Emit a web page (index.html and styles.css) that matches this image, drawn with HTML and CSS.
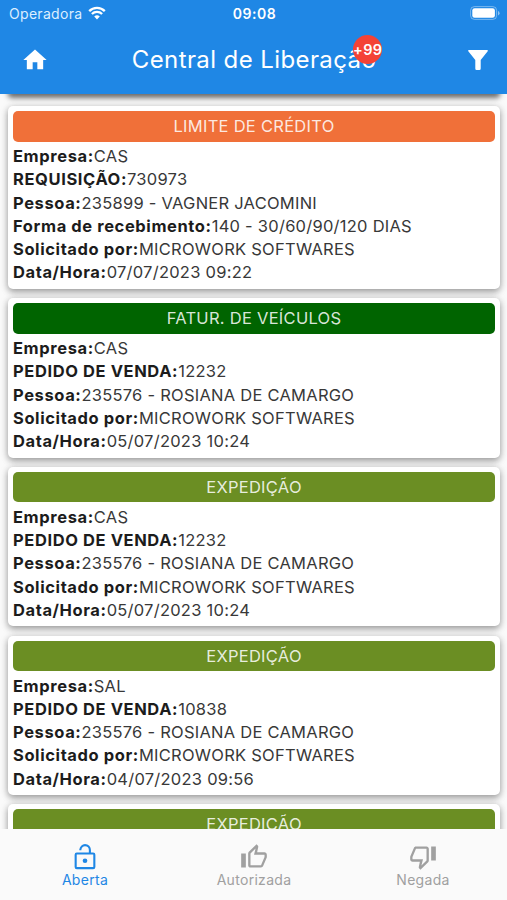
FILE: index.html
```html
<!DOCTYPE html>
<html lang="pt-BR">
<head>
<meta charset="utf-8">
<title>Central de Liberação</title>
<link rel="stylesheet" href="styles.css">
</head>
<body>
<div class="app">
  <header class="header">
    <div class="status">
      <div class="carrier"><span>Operadora</span>
        <svg class="wifi" viewBox="0 0 18 14"><path d="M1.2 5.1a11 11 0 0 1 15.6 0M3.9 8a7.2 7.2 0 0 1 10.2 0" fill="none" stroke="currentColor" stroke-width="2.3"/><path d="M9 13.6 6.2 10.6a4 4 0 0 1 5.6 0Z" fill="currentColor"/></svg>
      </div>
      <div class="clock">09:08</div>
      <svg class="battery" viewBox="0 0 30 14"><rect x=".6" y=".6" width="26" height="12.8" rx="3.8" fill="none" stroke="currentColor" stroke-opacity=".4"/><rect x="2.3" y="2.2" width="22.6" height="9.6" rx="2.3" fill="currentColor"/><path d="M28 5v4.4q1.6-.6 1.6-2.2T28 5Z" fill="currentColor" opacity=".5"/></svg>
    </div>
    <div class="bar">
      <svg class="home" viewBox="0 0 24 24"><path d="M10 20v-6h4v6h5v-8h3L12 3 2 12h3v8z" fill="currentColor"/></svg>
      <h1 class="title">Central de Liberação<span class="badge">+99</span></h1>
      <svg class="filter" viewBox="0 0 20 20"><path d="M.8 0h18.4q1 .3.5 1.2L12.7 10v8.5q0 1.5-1.3 1.5H8.6q-1.3 0-1.3-1.5V10L.3 1.2Q-.2.3.8 0Z" fill="currentColor"/></svg>
    </div>
  </header>
  <main class="list">
    <section class="card">
      <h2 class="banner credit">LIMITE DE CRÉDITO</h2>
      <p><b>Empresa:</b>CAS</p>
      <p><b>REQUISIÇÃO:</b>730973</p>
      <p><b>Pessoa:</b>235899 - VAGNER JACOMINI</p>
      <p><b>Forma de recebimento:</b>140 - 30/60/90/120 DIAS</p>
      <p><b>Solicitado por:</b>MICROWORK SOFTWARES</p>
      <p><b>Data/Hora:</b>07/07/2023 09:22</p>
    </section>
    <section class="card">
      <h2 class="banner billing">FATUR. DE VEÍCULOS</h2>
      <p><b>Empresa:</b>CAS</p>
      <p><b>PEDIDO DE VENDA:</b>12232</p>
      <p><b>Pessoa:</b>235576 - ROSIANA DE CAMARGO</p>
      <p><b>Solicitado por:</b>MICROWORK SOFTWARES</p>
      <p><b>Data/Hora:</b>05/07/2023 10:24</p>
    </section>
    <section class="card">
      <h2 class="banner shipping">EXPEDIÇÃO</h2>
      <p><b>Empresa:</b>CAS</p>
      <p><b>PEDIDO DE VENDA:</b>12232</p>
      <p><b>Pessoa:</b>235576 - ROSIANA DE CAMARGO</p>
      <p><b>Solicitado por:</b>MICROWORK SOFTWARES</p>
      <p><b>Data/Hora:</b>05/07/2023 10:24</p>
    </section>
    <section class="card">
      <h2 class="banner shipping">EXPEDIÇÃO</h2>
      <p><b>Empresa:</b>SAL</p>
      <p><b>PEDIDO DE VENDA:</b>10838</p>
      <p><b>Pessoa:</b>235576 - ROSIANA DE CAMARGO</p>
      <p><b>Solicitado por:</b>MICROWORK SOFTWARES</p>
      <p><b>Data/Hora:</b>04/07/2023 09:56</p>
    </section>
    <section class="card">
      <h2 class="banner shipping">EXPEDIÇÃO</h2>
    </section>
  </main>
  <nav class="tabs">
    <a class="tab active"><svg viewBox="0 0 24 24"><path d="M8 6.300V5.700C8.300 3.500 10 1.800 12 1.800c2.400 0 4.200 1.900 4.200 4.300V9M5 9h14q1 0 1 1v10.500q0 1-1 1H5q-1 0-1-1V10q0-1 1-1Z" fill="none" stroke="currentColor" stroke-width="1.800"/><circle cx="12" cy="15.200" r="2" fill="currentColor"/></svg><span>Aberta</span></a>
    <a class="tab"><svg viewBox="0 0 24 24"><path d="M9 21h9c.83 0 1.540-.5 1.840-1.220l3.020-7.050c.09-.23.14-.47.14-.73v-2c0-1.100-.9-2-2-2h-6.310l.95-4.570.03-.32c0-.41-.17-.79-.44-1.060L14.170 1 7.580 7.590C7.220 7.950 7 8.450 7 9v10c0 1.100.9 2 2 2zM9 9l4.340-4.340L12 10h9v2l-3 7H9V9zM1 9h4v12H1z" fill="currentColor"/></svg><span>Autorizada</span></a>
    <a class="tab"><svg viewBox="0 0 24 24"><path d="M15 3H6c-.83 0-1.540.5-1.840 1.220l-3.020 7.050c-.09.23-.14.47-.14.73v2c0 1.100.9 2 2 2h6.310l-.95 4.570-.03.32c0 .41.17.79.44 1.060L9.830 23l6.590-6.590c.36-.36.58-.86.58-1.410V5c0-1.100-.9-2-2-2zm0 12-4.340 4.340L12 14H3v-2l3-7h9v10zm4-12h4v12h-4z" fill="currentColor"/></svg><span>Negada</span></a>
  </nav>
</div>
</body>
</html>
```
FILE: styles.css
```css
* { box-sizing: border-box; }
body { margin: 0; font-family: Inter, "Liberation Sans", sans-serif; }
.app { height: 900px; display: flex; flex-direction: column; overflow: hidden; background: #fafafa; color: #383838; }
.header { flex: none; height: 94px; background: #1f87e5; color: #fff; position: relative; z-index: 1; }
.status { height: 28px; padding: 0 7px 0 9px; display: grid; grid-template-columns: 1fr auto 1fr; align-items: center; }
.carrier { display: flex; align-items: center; gap: 6px; font-size: 14px; line-height: 16px; letter-spacing: .3px; color: #dceeff; margin-top: 0; }
.wifi { width: 18px; height: 14px; color: #fff; margin-top: -3px; }
.clock { font-size: 14px; line-height: 16px; font-weight: 600; letter-spacing: .5px; }
.battery { width: 30px; height: 14px; justify-self: end; margin-top: -2px; }
.bar { height: 64px; padding: 0 18px 0 21px; display: flex; align-items: center; justify-content: space-between; }
.home { width: 28px; height: 28px; margin-top: -1px; }
.title { position: relative; margin: 0 9px 0 0; font-size: 24px; line-height: 32px; font-weight: 400; letter-spacing: .4px; white-space: nowrap; }
.badge { position: absolute; right: -6px; top: -9px; width: 29px; height: 29px; border-radius: 50%; background: #f44336; font-size: 14.500px; font-weight: 600; line-height: 29px; display: flex; justify-content: center; letter-spacing: .4px; }
.filter { width: 20px; height: 20px; margin-right: 1px; }
.list { flex: 1; min-height: 0; overflow: hidden; padding: 12.200px 7px 0 8px; display: flex; flex-direction: column; gap: 9.200px; }
.list::before { content: ""; flex: none; height: 10px; margin: -22px 0 2.800px; border-radius: 4px; box-shadow: 0 4px 5px rgba(0,0,0,.5), 0 1px 8px rgba(0,0,0,.18); }
.card { flex: none; padding: 5px 5px 4.300px; border-radius: 5px; background: #fff; box-shadow: 0 3px 6px rgba(0,0,0,.28), 0 1px 8px rgba(0,0,0,.18); }
.banner { margin: 0 0 3.400px; height: 30.600px; border-radius: 5px; color: rgba(255,255,255,.86); font-size: 16.500px; line-height: 30.600px; font-weight: 400; text-align: center; letter-spacing: .27px; }
.credit { background: #f07039; }
.billing { background: #006400; }
.shipping { background: #6b8e23; }
.card p { margin: 0; font-size: 16.500px; line-height: 23.250px; letter-spacing: .25px; white-space: nowrap; }
.card b { font-weight: 650; letter-spacing: .6px; color: #1c1c1c; }
.tabs { flex: none; height: 71px; display: flex; position: relative; background: #fafafa; }
.tab { flex: 1; display: flex; flex-direction: column; align-items: center; padding-top: 14px; font-size: 14px; line-height: 18px; letter-spacing: .3px; color: #a0a0a0; }
.tab span { padding-left: 1px; }
.tab svg { width: 28px; height: 28px; }
.active { color: #1f87e5; }
```
